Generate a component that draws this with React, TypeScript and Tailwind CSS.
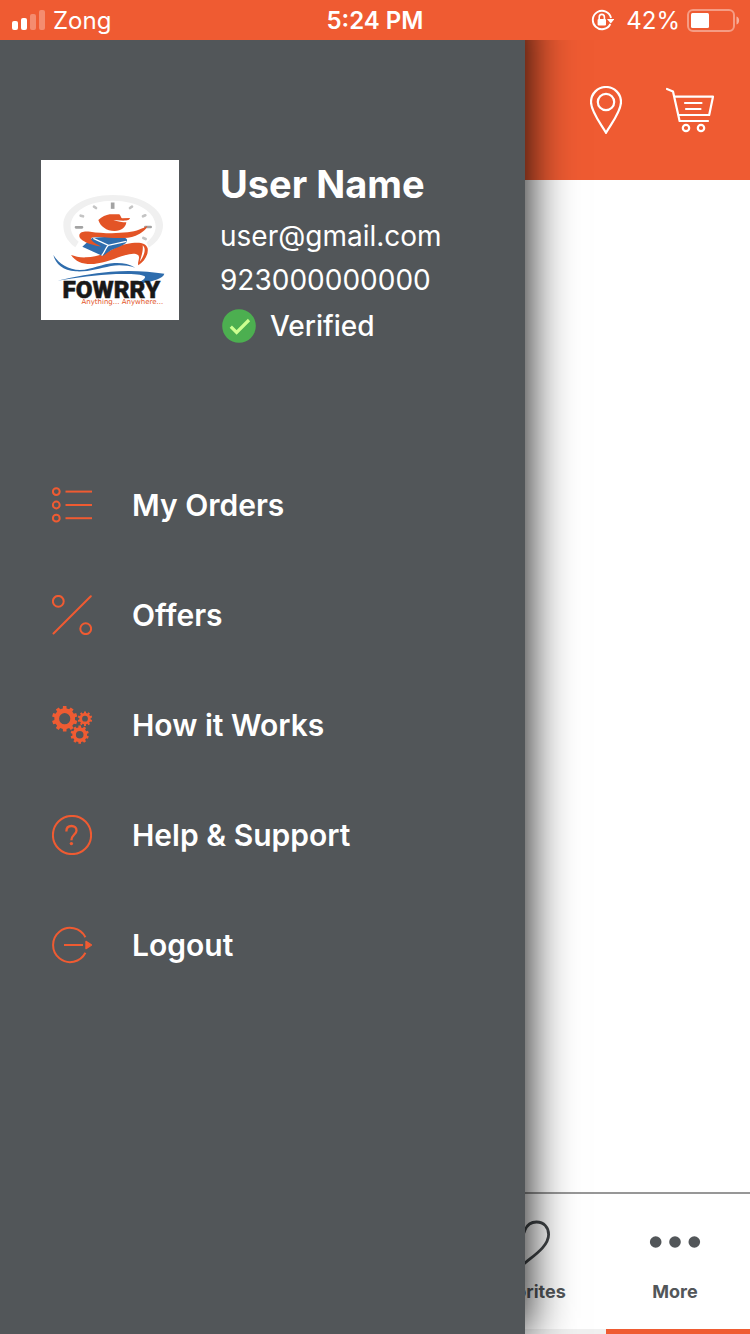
import React from "react";

const ORANGE = "#ef5b32";

function gearPath(cx: number, cy: number, outer: number, root: number, hole: number, teeth: number): string {
  const step = (Math.PI * 2) / teeth;
  const points: string[] = [];
  for (let i = 0; i < teeth; i++) {
    const a = i * step - Math.PI / 2;
    const corners: [number, number][] = [
      [root, a - step * 0.29],
      [outer, a - step * 0.22],
      [outer, a + step * 0.22],
      [root, a + step * 0.29],
    ];
    for (const [r, t] of corners) {
      points.push(`${(cx + r * Math.cos(t)).toFixed(2)} ${(cy + r * Math.sin(t)).toFixed(2)}`);
    }
  }
  return (
    `M${points.join("L")}Z` +
    `M${cx - hole} ${cy}a${hole} ${hole} 0 1 0 ${hole * 2} 0a${hole} ${hole} 0 1 0 ${-hole * 2} 0Z`
  );
}

function OrdersIcon() {
  return (
    <svg viewBox="0 0 40 40" className="size-10" fill="none" stroke={ORANGE} strokeWidth="2" aria-hidden="true">
      {[6.6, 20, 33.2].map((y) => (
        <g key={y}>
          <circle cx="4.3" cy={y} r="3.4" />
          <path d={`M13.5 ${y}H40`} />
        </g>
      ))}
    </svg>
  );
}

function OffersIcon() {
  return (
    <svg viewBox="0 0 40 40" className="size-10" fill="none" stroke={ORANGE} strokeWidth="2" aria-hidden="true">
      <circle cx="6.3" cy="6.3" r="5.4" />
      <circle cx="33.7" cy="33.7" r="5.4" />
      <path d="M1.5 38.5L38.8 1.2" strokeLinecap="round" />
    </svg>
  );
}

function GearsIcon() {
  return (
    <svg viewBox="0 0 40 40" className="size-10" fill={ORANGE} fillRule="evenodd" aria-hidden="true">
      <path d={gearPath(12.7, 13.7, 12.8, 10.4, 5.6, 10)} />
      <path d={gearPath(33, 13.7, 7.3, 5.7, 2.9, 10)} />
      <path d={gearPath(27.7, 29.7, 9.2, 7.4, 3.8, 10)} />
    </svg>
  );
}

function HelpIcon() {
  return (
    <svg viewBox="0 0 40 40" className="size-10" fill="none" stroke={ORANGE} strokeWidth="2" aria-hidden="true">
      <circle cx="20" cy="20" r="19.1" />
      <path d="M14.4 16.6V16C14.4 12.7 16.7 11 19.5 11C22.4 11 24.5 12.8 24.5 15.4C24.5 19.4 19.4 19.8 19.4 25.2" strokeWidth="2.3" />
      <circle cx="19.4" cy="28.6" r="1.7" fill={ORANGE} stroke="none" />
    </svg>
  );
}

function LogoutIcon() {
  return (
    <svg viewBox="0 0 40 40" className="size-10" fill="none" stroke={ORANGE} strokeWidth="2" aria-hidden="true">
      <path d="M33.4 12.2A17.1 17.1 0 1 0 33.4 27.8" />
      <path d="M12 20H31" />
      <path d="M34 16.4L39.6 20L34 23.6Z" fill={ORANGE} strokeWidth="1.4" strokeLinejoin="round" />
    </svg>
  );
}

function FowrryLogo() {
  return (
    <svg viewBox="15 15 414 480" className="h-[160px] w-[138px] shrink-0 bg-white" role="img" aria-label="Fowrry">
      <path
        d="M118 277C92 258 82 235 82 210C82 160 145 120 231 120C317 120 381 160 381 210C381 236 367 260 338 278L332 262C350 248 359 232 359 214C359 171 305 137 231 137C157 137 104 171 104 214C104 232 112 247 128 260Z"
        fill="#f0f0f0"
      />
      <g stroke="#a3a3a3" strokeWidth="8" strokeLinecap="round">
        <path d="M120 217H138M328 216H344" />
        <path d="M230 148V156" strokeWidth="11" strokeLinecap="square" />
        <path d="M174 155L180 159M288 155L282 159M134 182L141 184M328 181L321 184M322 249L329 252" stroke="#c4c4c4" />
      </g>
      <g fill="#e35426">
        <path d="M187 195C198 185 210 180 221 178H250C254 182 254 187 258 190L282 189C280 195 276 196 262 197L232 195C245 200 260 202 271 202C269 218 256 228 236 228C211 228 193 214 187 195Z" />
        <path d="M105 300C117 304 133 308 150 307C181 305 202 298 224 286C247 272 265 267 288 264C313 261 330 264 335 280C338 300 324 320 307 331C303 323 314 307 306 300C297 293 282 296 267 301C239 309 207 324 174 327C142 329 120 321 105 300Z" />
      </g>
      <path d="M320 271C330 279 328 298 311 320C317 301 322 287 320 271Z" fill="#fff" />
      <path d="M139 275L151 264L169 248L218 245L268 249C275 252 274 258 270 264C257 274 239 279 226 285C217 291 208 298 200 303Z" fill="#2f6dad" />
      <path
        d="M130 240C132 229 147 228 163 230C195 235 240 236 275 232C302 229 322 219 334 213C331 224 316 235 299 242C268 254 226 248 189 246C168 245 162 249 166 254C171 262 184 268 196 275C178 273 151 265 139 256C133 251 129 247 130 240Z"
        fill="#e35426"
      />
      <path d="M172 250L217 271L271 259M217 271C208 279 208 289 197 302" fill="none" stroke="#fff" strokeWidth="4" />
      <path d="M52 300C70 328 97 344 132 345C170 344 197 326 235 324C261 323 279 327 298 338C273 331 249 329 225 333C188 341 158 351 119 349C81 346 59 328 52 300Z" fill="#2f6dad" />
      <path d="M64 377C118 364 168 355 224 350C282 345 340 349 385 356C382 370 350 378 323 384H305C319 377 331 370 326 364C317 357 279 356 240 357C181 359 121 369 64 377Z" fill="#2f6dad" />
      <text x="226" y="430" textAnchor="middle" fontFamily="Roboto, 'Liberation Sans', sans-serif" fontWeight="900" fontSize="73" fill="#191919" stroke="#191919" strokeWidth="1.5">
        FOWRRY
      </text>
      <text x="259" y="448" textAnchor="middle" fontFamily="'DejaVu Sans', sans-serif" fontSize="21" fill="#e35426">
        Anything... Anywhere...
      </text>
    </svg>
  );
}

function StatusBar() {
  return (
    <div className="absolute inset-x-0 top-0 z-20 grid h-10 grid-cols-3 items-center bg-[#ef5b32] px-3 pt-0.5 text-2xl text-white">
      <div className="flex items-center gap-2">
        <svg viewBox="0 1 33 20" className="h-5 w-[33px]" fill="#fff" overflow="visible" aria-hidden="true">
          <rect x="0" y="11" width="6" height="9" rx="2" />
          <rect x="9" y="8" width="6" height="12" rx="2" />
          <rect x="18" y="4" width="6" height="16" rx="2" opacity=".3" />
          <rect x="27" y="0" width="6" height="20" rx="2" opacity=".3" />
        </svg>
        <span>Zong</span>
      </div>
      <time className="text-center font-semibold">5:24 PM</time>
      <div className="flex items-center justify-end">
        <svg viewBox="0 1 24 24" className="mr-3 size-6" aria-hidden="true">
          <path d="M20.3 16A9.2 9.2 0 1 1 21 10" fill="none" stroke="#fff" strokeWidth="1.9" />
          <path d="M17 11H24.4L20.8 15.4Z" fill="#fff" />
          <rect x="7.6" y="11" width="8.4" height="6.6" rx="1" fill="#fff" />
          <path d="M9.2 11V9.2A2.6 2.8 0 0 1 14.4 9.2V11" fill="none" stroke="#fff" strokeWidth="1.6" />
        </svg>
        <span className="mr-1.5">42%</span>
        <svg viewBox="0 1 54 24" className="-mr-0.5 h-6 w-[54px]" aria-hidden="true">
          <rect x="2" y="2" width="46" height="21" rx="5" fill="none" stroke="#fff" strokeOpacity=".4" strokeWidth="2" />
          <rect x="5" y="5" width="18" height="15" rx="1.5" fill="#fff" />
          <path d="M50.5 8.5C54 9.5 54 15.5 50.5 16.5Z" fill="#fff" fillOpacity=".5" />
        </svg>
      </div>
    </div>
  );
}

function Header() {
  return (
    <header className="flex h-[180px] items-center justify-end gap-11 bg-[#ef5b32] pt-10 pr-9">
      <button type="button" aria-label="Location">
        <svg viewBox="0 0 32 48" className="h-12 w-8" fill="none" stroke="#fff" strokeWidth="2.2">
          <path d="M16 46.8C11 38 1 26 1 16A15 15 0 0 1 31 16C31 26 21 38 16 46.8Z" />
          <circle cx="16" cy="16" r="8.2" />
        </svg>
      </button>
      <button type="button" aria-label="Cart">
        <svg viewBox="0 0 48 48" className="size-12" fill="none" stroke="#fff" strokeWidth="2.2" strokeLinecap="round" strokeLinejoin="round">
          <path d="M1 3L7 5.4L13.6 35H42" />
          <path d="M9 10.6H47L43.2 29H13" />
          <path d="M19 17H35.5M20 23H34.5" />
          <circle cx="20" cy="42" r="3.2" />
          <circle cx="35" cy="42" r="3.2" />
        </svg>
      </button>
    </header>
  );
}

function TabBar() {
  return (
    <nav className="border-t-2 border-[#979797] bg-white text-lg font-bold text-[#525659]">
      <div className="flex h-[135px] justify-end pt-6">
        <a href="#favorites" className="flex w-1/5 flex-col items-center gap-3">
          <svg viewBox="0 0 52 48" className="h-12 w-[52px]" fill="none" stroke="#424649" strokeWidth="2.8" aria-hidden="true">
            <path d="M26 45C18 38 2 28.5 2 16.5C2 9.5 6.5 4 13.5 4C19 4 23.5 7 26 12C28 7 32 4 37.5 4C45 4 49.6 9.5 49.6 16.5C49.6 28.5 34 38 26 45Z" />
          </svg>
          <span>Favorites</span>
        </a>
        <a href="#more" className="flex w-1/5 flex-col items-center gap-3">
          <svg viewBox="0 0 52 48" className="h-12 w-[52px]" fill="#525659" aria-hidden="true">
            <circle cx="6.7" cy="24" r="5.8" />
            <circle cx="26" cy="24" r="5.8" />
            <circle cx="45.3" cy="24" r="5.8" />
          </svg>
          <span>More</span>
        </a>
      </div>
      <div className="flex h-[5px] justify-end bg-[#f0f0f0]">
        <div className="w-36 bg-[#ef5b32]" />
      </div>
    </nav>
  );
}

const menu = [
  { label: "My Orders", href: "#orders", Icon: OrdersIcon },
  { label: "Offers", href: "#offers", Icon: OffersIcon },
  { label: "How it Works", href: "#how-it-works", Icon: GearsIcon },
  { label: "Help & Support", href: "#help", Icon: HelpIcon },
  { label: "Logout", href: "#logout", Icon: LogoutIcon },
];

function Drawer() {
  return (
    <aside className="absolute inset-y-0 left-0 z-10 w-[70%] bg-[#525659] pt-40 text-white shadow-[0_0_46px_#000]">
      <section className="flex items-start gap-[41px] pl-[41px]">
        <FowrryLogo />
        <div className="text-[28px] leading-[44px]">
          <h1 className="mb-1.5 text-[38px] leading-[48px] font-bold">User Name</h1>
          <p>user@gmail.com</p>
          <p>923000000000</p>
          <p className="flex h-12 items-center gap-3.5 pl-0.5 font-medium">
            <svg viewBox="0 0 34 34" className="size-[34px]" aria-hidden="true">
              <circle cx="17" cy="17" r="16.8" fill="#4caf50" />
              <path d="M8.8 17.6L14.6 23.4L27 11" fill="none" stroke="#ccff90" strokeWidth="3.2" />
            </svg>
            Verified
          </p>
        </div>
      </section>
      <nav className="mt-[100px]">
        <ul>
          {menu.map(({ label, href, Icon }) => (
            <li key={label}>
              <a href={href} className="flex h-[110px] items-center gap-10 pl-[52px] text-[30px] font-semibold">
                <Icon />
                {label}
              </a>
            </li>
          ))}
        </ul>
      </nav>
    </aside>
  );
}

export default function App() {
  return (
    <div className="relative flex min-h-screen flex-col overflow-hidden bg-white font-[Inter,'Liberation_Sans',sans-serif]">
      <StatusBar />
      <Header />
      <main className="flex-1" />
      <TabBar />
      <Drawer />
    </div>
  );
}
